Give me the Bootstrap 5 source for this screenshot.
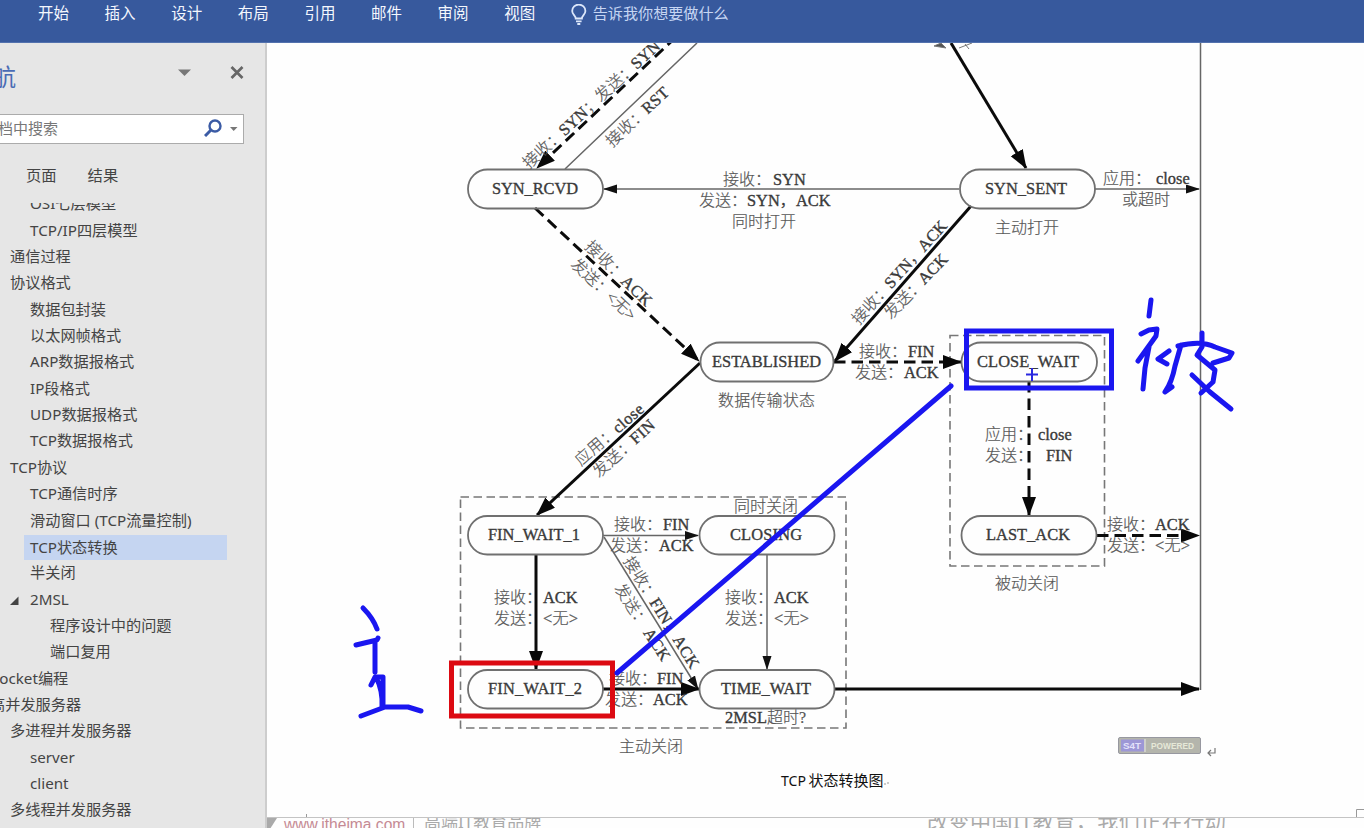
<!DOCTYPE html>
<html lang="zh-CN">
<head>
<meta charset="utf-8">
<title>TCP 状态转换图</title>
<meta name="viewport" content="width=device-width, initial-scale=1">
<link href="https://cdn.jsdelivr.net/npm/bootstrap@5.3.0/dist/css/bootstrap.min.css" rel="stylesheet">
<style>
body{font-family:"Noto Sans","Noto Sans CJK SC",sans-serif;font-size:15px;color:#444;height:828px;background:#fefefe}
.ribbon{height:43px;background:#37599d;color:#f4f7fd;font-size:15.5px;line-height:26px;padding-left:38px;border-bottom:1px solid #5372ae}
.ribbon .tab-item{width:66.6px;color:inherit;text-decoration:none}
.ribbon .bulb{margin:4px 6px 0 0}
.ribbon .tell{font-size:15.1px;color:#c6d6f3;line-height:27px}
.side{width:267px;background:#e6e6e6;border-right:2px solid #cdcdcd}
.side-head{height:71px;padding:0 21px 0 0}
.side-tools{gap:39px;padding-top:22px}
.side-title{font-size:24px;color:#4a6cb5;margin-left:-8px;line-height:67px}
.search{height:30px;width:244px;background:#fff;border:1px solid #ababab;border-left:0;color:#777;font-size:15px;line-height:26px}
.search span{margin:-3px 0 0 -2px}
.search .lens{margin-top:-3px}
.search .caret{margin:0 5px 0 8px}
.side-tabs{height:59px;padding:17px 0 0 26px;gap:31px;font-size:15.3px;line-height:28px}
.tree{line-height:25.6px;font-size:15.2px}
.tree ul{margin-top:-11.8px}
.tree li{height:26.37px;white-space:nowrap}
.tree .l0{margin-left:-8px}.tree .l0w{margin-left:-10px}.tree .l1{padding-left:10px}.tree .l2{padding-left:30px}.tree .l3{padding-left:50px}
.tree .sel{margin-left:24px;width:203px;padding-left:6px;background:#c5d5f1;background-clip:padding-box;border-top:1px solid transparent;line-height:24px}
.tree .tri{width:20px}
.foot{height:11px;border-top:1.5px solid #c4c4c4;color:#aaa;line-height:12px}
.foot .site{color:#c58a94;font-family:"Liberation Sans",sans-serif;font-size:15.6px;margin-left:7px;width:129px;line-height:14px}
.foot .slogan{font-size:17px;width:514px;padding-left:10px;line-height:7px;border-left:1px solid #bbb}
.foot .motto{font-size:21px;line-height:6px;letter-spacing:.5px}
.diagram text{font-family:"Liberation Serif","Noto Sans CJK SC",serif;font-size:16px;fill:#565656;font-weight:300;stroke:#565656;stroke-width:.2}
.diagram .lat{fill:#3a3a3a;stroke:#3a3a3a;stroke-width:.35;font-size:16.4px}
.diagram .state rect{fill:none;stroke:#707070;stroke-width:1.8}
.diagram .thin{stroke:#666;stroke-width:1.5;fill:none}
.diagram .fat{stroke:#0b0b0b;stroke-width:3;fill:none}
.diagram .dash{stroke-dasharray:11.5 6}
.diagram .zone{fill:none;stroke:#777;stroke-width:1.6;stroke-dasharray:8.5 4.5}
.diagram .pen{fill:none;stroke:#1a16f0;stroke-width:5;stroke-linecap:round;stroke-linejoin:round}
.diagram .chip{font:bold 8.5px "Liberation Sans",sans-serif;stroke:none}
.diagram .figcap{font:400 15px "Noto Sans","Noto Sans CJK SC",sans-serif;fill:#111;stroke:none}
</style>
<script src="https://cdn.jsdelivr.net/npm/bootstrap@5.3.0/dist/js/bootstrap.bundle.min.js"></script>
</head>
<body class="d-flex flex-column overflow-hidden">
<nav class="ribbon d-flex flex-shrink-0 align-items-start">
  <a class="tab-item">开始</a><a class="tab-item">插入</a><a class="tab-item">设计</a><a class="tab-item">布局</a><a class="tab-item">引用</a><a class="tab-item">邮件</a><a class="tab-item">审阅</a><a class="tab-item">视图</a>
  <svg width="16" height="22" viewBox="0 0 16 22" class="bulb" fill="none" stroke="#dce7fb" stroke-width="1.8"><path d="M4.7 14.500C4.7 11.500 1.2 10.500 1.2 6.900A6.600 6.300 0 0 1 14.400 6.900C14.400 10.500 10.900 11.500 10.900 14.500ZM5 17.400H10.600M6.300 20H9.300"/></svg>
  <span class="tell">告诉我你想要做什么</span>
</nav>
<div class="d-flex flex-grow-1 overflow-hidden">
  <aside class="side d-flex flex-column flex-shrink-0 overflow-hidden">
    <div class="side-head d-flex justify-content-between flex-shrink-0">
      <span class="side-title">航</span>
      <div class="side-tools d-flex">
        <svg width="13" height="14"><path d="M0 4.500H13L6.500 11Z" fill="#777"/></svg>
        <svg width="14" height="14" stroke="#666" stroke-width="2.700"><path d="M1.500 2L12.500 13M12.500 2L1.500 13"/></svg>
      </div>
    </div>
    <div class="search d-flex align-items-center flex-shrink-0">
      <span class="flex-grow-1">档中搜索</span>
      <svg class="lens" width="18" height="18" fill="none" stroke="#3b5ba5" stroke-width="2.400"><circle cx="11" cy="7" r="5.500"/><path d="M7 11L1 17" stroke-width="3"/></svg>
      <svg class="caret" width="8" height="6"><path d="M0 1H7.500L3.700 5Z" fill="#777"/></svg>
    </div>
    <div class="side-tabs d-flex flex-shrink-0"><span>页面</span><span>结果</span></div>
    <nav class="tree flex-grow-1 overflow-hidden">
      <ul class="list-unstyled mb-0">
        <li class="l2">OSI七层模型</li>
        <li class="l2">TCP/IP四层模型</li>
        <li class="l1">通信过程</li>
        <li class="l1">协议格式</li>
        <li class="l2">数据包封装</li>
        <li class="l2">以太网帧格式</li>
        <li class="l2">ARP数据报格式</li>
        <li class="l2">IP段格式</li>
        <li class="l2">UDP数据报格式</li>
        <li class="l2">TCP数据报格式</li>
        <li class="l1">TCP协议</li>
        <li class="l2">TCP通信时序</li>
        <li class="l2">滑动窗口 (TCP流量控制)</li>
        <li class="sel">TCP状态转换</li>
        <li class="l2">半关闭</li>
        <li class="l1 d-flex"><span class="tri"><svg width="9" height="9"><path d="M0 9H8.500V.5Z" fill="#444"/></svg></span>2MSL</li>
        <li class="l3">程序设计中的问题</li>
        <li class="l3">端口复用</li>
        <li class="l0">socket编程</li>
        <li class="l0w">高并发服务器</li>
        <li class="l1">多进程并发服务器</li>
        <li class="l2">server</li>
        <li class="l2">client</li>
        <li class="l1">多线程并发服务器</li>
      </ul>
    </nav>
  </aside>
  <main class="d-flex flex-column flex-grow-1 overflow-hidden">
    <svg class="diagram flex-shrink-0" width="1097" height="774" viewBox="267 43 1097 774">
      <defs>
        <marker id="big" markerUnits="userSpaceOnUse" markerWidth="20" markerHeight="16" refX="18" refY="7" orient="auto"><path d="M0 0L19 7L0 14Z" fill="#080808"/></marker>
        <marker id="small" markerUnits="userSpaceOnUse" markerWidth="15" markerHeight="10" refX="13" refY="4.500" orient="auto"><path d="M0 0L14 4.500L0 9Z" fill="#111"/></marker>
      </defs>
      <!-- grouped states -->
      <path class="zone" d="M460.500 497H846V728H460.500Z"/>
      <path class="zone" d="M950 335.500H1104.500V566H950Z"/>
      <!-- transitions -->
      <path class="fat dash" d="M676 37L537 168" marker-end="url(#big)"/>
      <path class="thin" d="M697 43L565 169M1200.500 43V690"/>
      <path class="fat" d="M951 43L1026 168" marker-end="url(#big)"/>
      <path d="M934 46L941 43L946 48ZM959 48L972 43M965 44L969 49" fill="#555" stroke="#777"/>
      <path class="thin" d="M959 189H604" marker-end="url(#small)"/>
      <path class="thin" d="M1095 189H1199" marker-end="url(#small)"/>
      <path class="fat dash" d="M535 208L699 361" marker-end="url(#big)"/>
      <path class="fat" d="M971 206L835 361" marker-end="url(#big)"/>
      <path class="fat dash" d="M834 362H961" marker-end="url(#big)"/>
      <path class="fat" d="M700 363L537 515" marker-end="url(#big)"/>
      <path class="fat dash" d="M1029 381V515" marker-end="url(#big)"/>
      <path class="fat dash" d="M1097 535.500H1199" marker-end="url(#big)"/>
      <path class="thin" d="M603 535.500H698" marker-end="url(#small)"/>
      <path class="thin" d="M604 537L698 689" marker-end="url(#small)"/>
      <path class="thin" d="M767 555V669" marker-end="url(#small)"/>
      <path class="fat" d="M536 555V669" marker-end="url(#big)"/>
      <path class="fat" d="M603 689H699" marker-end="url(#big)"/>
      <path class="fat" d="M835 689H1199" marker-end="url(#big)"/>
      <!-- states -->
      <g class="state">
        <rect x="468" y="169.500" width="135" height="39" rx="19.500"/><rect x="960" y="169.500" width="135" height="39" rx="19.500"/>
        <rect x="700.500" y="342.500" width="133" height="39" rx="19.500"/><rect x="961.500" y="342.500" width="135.500" height="39" rx="19.500"/>
        <rect x="468" y="516" width="135" height="38.500" rx="19.300"/><rect x="699.500" y="516" width="135" height="38.500" rx="19.300"/>
        <rect x="961.500" y="516" width="135" height="38.500" rx="19.300"/>
        <rect x="468" y="670" width="135" height="38.500" rx="19.300"/><rect x="699.500" y="670" width="135" height="38.500" rx="19.300"/>
      </g>
      <g>
        <text class="lat" x="492" y="194" textLength="86">SYN_RCVD</text>
        <text class="lat" x="985" y="194" textLength="82">SYN_SENT</text>
        <text class="lat" x="712" y="367" textLength="109">ESTABLISHED</text>
        <text class="lat" x="977" y="367" textLength="102">CLOSE_WAIT</text>
        <text class="lat" x="488" y="540" textLength="92">FIN_WAIT_1</text>
        <text class="lat" x="730" y="540" textLength="72">CLOSING</text>
        <text class="lat" x="986" y="540" textLength="84">LAST_ACK</text>
        <text class="lat" x="488" y="694" textLength="94">FIN_WAIT_2</text>
        <text class="lat" x="721" y="694" textLength="90">TIME_WAIT</text>
      </g>
      <!-- level captions -->
      <g>
        <text x="723" y="185">接收：<tspan class="lat" x="773">SYN</tspan></text>
        <text x="699" y="206">发送：<tspan class="lat" x="747">SYN，</tspan><tspan class="lat" x="796">ACK</tspan></text>
        <text x="732" y="227">同时打开</text>
        <text x="1103" y="184">应用：<tspan class="lat" x="1156">close</tspan></text>
        <text x="1122" y="205">或超时</text>
        <text x="995" y="233">主动打开</text>
        <text x="718" y="406" textLength="97">数据传输状态</text>
        <text x="859" y="357">接收：<tspan class="lat" x="908">FIN</tspan></text>
        <text x="855" y="378">发送：<tspan class="lat" x="904">ACK</tspan></text>
        <text x="985" y="440">应用：<tspan class="lat" x="1038">close</tspan></text>
        <text x="985" y="461">发送：<tspan class="lat" x="1046">FIN</tspan></text>
        <text x="1107" y="530">接收：<tspan class="lat" x="1155">ACK</tspan></text>
        <text x="1107" y="551">发送：<tspan x="1155" textLength="35" lengthAdjust="spacingAndGlyphs">&lt;无&gt;</tspan></text>
        <text x="995" y="589">被动关闭</text>
        <text x="734" y="512">同时关闭</text>
        <text x="614" y="530">接收：<tspan class="lat" x="663">FIN</tspan></text>
        <text x="610" y="551">发送：<tspan class="lat" x="659">ACK</tspan></text>
        <text x="494" y="603">接收：<tspan class="lat" x="543">ACK</tspan></text>
        <text x="494" y="624">发送：<tspan x="543" textLength="35" lengthAdjust="spacingAndGlyphs">&lt;无&gt;</tspan></text>
        <text x="725" y="603">接收：<tspan class="lat" x="774">ACK</tspan></text>
        <text x="725" y="624">发送：<tspan x="774" textLength="35" lengthAdjust="spacingAndGlyphs">&lt;无&gt;</tspan></text>
        <text x="609" y="684">接收：<tspan class="lat" x="657">FIN</tspan></text>
        <text x="605" y="705">发送：<tspan class="lat" x="653">ACK</tspan></text>
        <text x="725" y="723"><tspan class="lat">2MSL</tspan>超时?</text>
        <text x="619" y="752">主动关闭</text>
      </g>
      <!-- captions that follow sloping lines -->
      <g text-anchor="middle">
        <text transform="translate(591 104) rotate(-42.700)" y="6" textLength="180">接收：<tspan class="lat">SYN</tspan>；发送：<tspan class="lat">SYN</tspan></text>
        <text transform="translate(637 116.500) rotate(-43)" y="6" textLength="79">接收：<tspan class="lat">RST</tspan></text>
        <text transform="translate(619 273) rotate(44)" y="6" textLength="86">接收：<tspan class="lat">ACK</tspan></text>
        <text transform="translate(604 289) rotate(43)" y="6" textLength="82">发送：&lt;无&gt;</text>
        <text transform="translate(899 272) rotate(-48)" y="6" textLength="133">接收：<tspan class="lat">SYN，ACK</tspan></text>
        <text transform="translate(915.500 286) rotate(-46)" y="6" textLength="83">发送：<tspan class="lat">ACK</tspan></text>
        <text transform="translate(609 434) rotate(-41)" y="6" textLength="85">应用：<tspan class="lat">close</tspan></text>
        <text transform="translate(623.500 448) rotate(-42)" y="6" textLength="77">发送：<tspan class="lat">FIN</tspan></text>
        <text transform="translate(662 612) rotate(58)" y="6" textLength="128">接收：<tspan class="lat">FIN，ACK</tspan></text>
        <text transform="translate(643 622) rotate(57)" y="6" textLength="88">发送： <tspan class="lat">ACK</tspan></text>
      </g>
      <!-- badge under the figure -->
      <rect x="1118.500" y="737.500" width="82" height="16" rx="1.500" fill="#b4b5ac" stroke="#9798a0"/>
      <rect x="1121" y="739.500" width="23" height="12" fill="#9d97d6"/><path d="M1145 739V752" stroke="#e8e8e8"/>
      <text class="chip" x="1123" y="748.500" textLength="18" lengthAdjust="spacingAndGlyphs" style="fill:#e4e2fa">S4T</text>
      <text class="chip" x="1151" y="748.500" textLength="43" lengthAdjust="spacingAndGlyphs" style="fill:#e6e8d8">POWERED</text>
      <path d="M1215 748V753H1208M1211 750L1208 753L1211 756" fill="none" stroke="#777" stroke-width="1.200"/>
      <text class="figcap" x="781" y="786" textLength="25" lengthAdjust="spacingAndGlyphs">TCP</text>
      <text class="figcap" x="808.500" y="786" textLength="75" lengthAdjust="spacingAndGlyphs">状态转换图</text>
      <path d="M884 784H886M888 782V784" stroke="#999"/>
      <path d="M306.500 814V817M1364 809.500H1356.500V817" stroke="#999" fill="none"/>
      <!-- pen annotations -->
      <rect x="451.500" y="663" width="161" height="53" fill="none" stroke="#dc0a12" stroke-width="5"/>
      <rect x="966.500" y="331" width="145" height="57" fill="none" stroke="#1a16f0" stroke-width="5"/>
      <path class="pen" d="M617 673L951 386"/>
      <path d="M1032 368V381M1026 374.500H1038" stroke="#2a28e0" stroke-width="2"/>
      <path class="pen" d="M363 608Q373 618 377 629M356 645L377 640L378 638M375 642V672M371 685L375 677L383 677V704M376 677Q383 691 382 707M361 716L385 707H408L421 711"/>
      <path class="pen" d="M1151 300L1149 316M1141 334L1149 330L1157 329L1156 336L1138 361M1149 347L1145 368L1143 389M1169 351L1158 359L1167 364M1181 345L1175 366Q1172 382 1165 392L1172 387M1178 346Q1201 340 1215 347L1232 353L1229 358L1213 363M1202 333V347L1197 355L1215 370L1213 382L1201 393M1192 375L1210 392L1231 409"/>
    </svg>
    <footer class="foot d-flex overflow-hidden flex-shrink-0 text-nowrap">
      <svg width="10" height="11"><path d="M0 0H10L3 11H0Z" fill="#aaa"/></svg>
      <span class="site">www.itheima.com.</span>
      <span class="slogan">高端IT教育品牌</span>
      <span class="motto">改变中国IT教育，我们正在行动</span>
    </footer>
  </main>
</div>
</body>
</html>
